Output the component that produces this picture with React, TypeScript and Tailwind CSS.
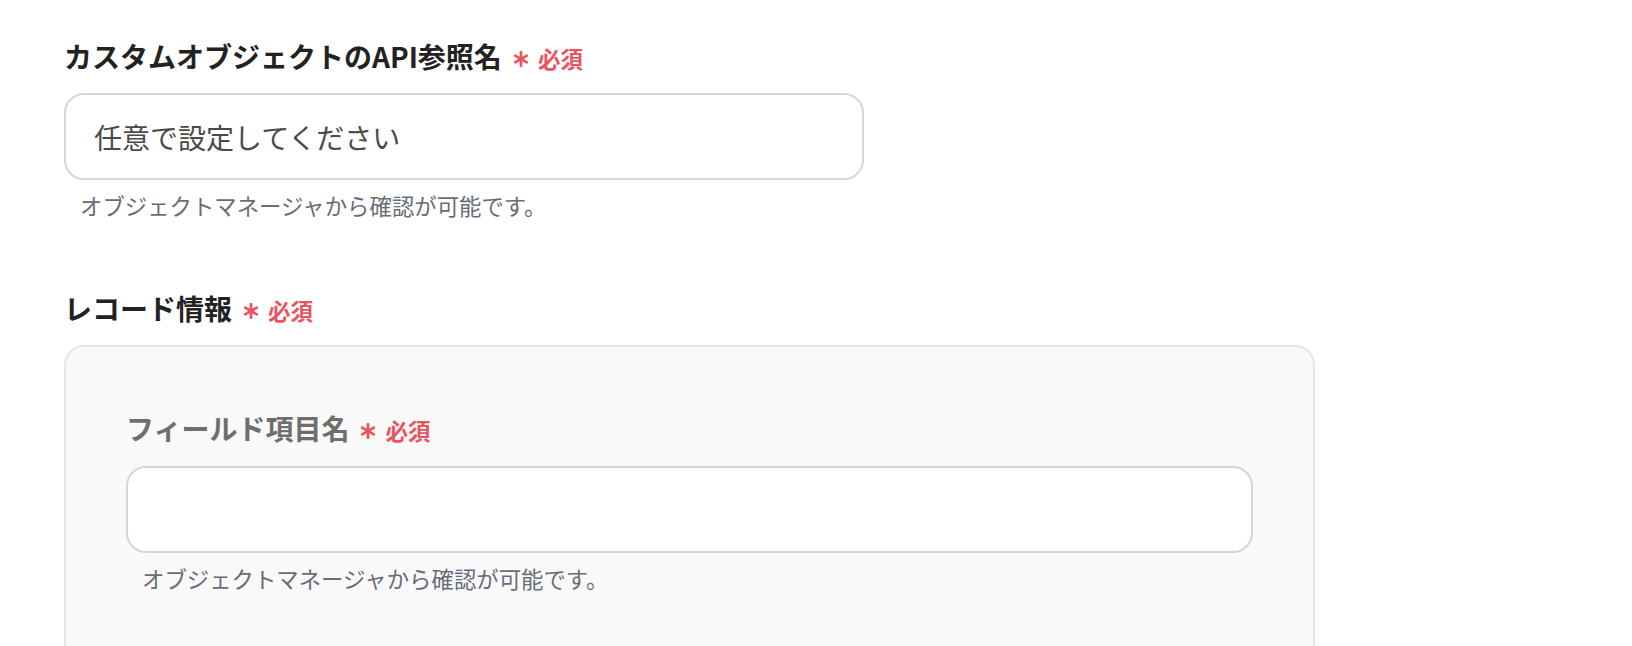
import React, { FC } from "react";

const font = { fontFamily: '"Noto Sans CJK JP", "Noto Sans", sans-serif' };

// Red asterisk + 必須 marker
const Required: FC = () => (
  <span className="flex items-center gap-[8px] pt-[5px] ml-[10px] text-[#e9545f]">
    <svg width="18" height="18" viewBox="0 0 16 16" className="shrink-0">
      <g stroke="currentColor" strokeWidth="2.4" strokeLinecap="butt">
        <line x1="8" y1="1" x2="8" y2="15" />
        <line x1="2" y1="4.5" x2="14" y2="11.5" />
        <line x1="2" y1="11.5" x2="14" y2="4.5" />
      </g>
    </svg>
    <span className="text-[22.5px] font-bold leading-none">必須</span>
  </span>
);

const Hint: FC = () => (
  <p className="mt-[9px] pl-4 text-[22.4px] leading-[33px] text-[#676d78]">
    オブジェクトマネージャから確認が可能です。
  </p>
);

const App: FC = () => {
  return (
    <div className="min-h-screen bg-white pl-16 pt-[35px]" style={font}>
      {/* Custom object API name */}
      <section>
        <div className="flex items-center">
          <h2 className="text-[28px] leading-[42px] font-bold text-[#222222]">
            カスタムオブジェクトのAPI参照名
          </h2>
          <Required />
        </div>
        <div className="mt-4 w-[800px] h-[87px] flex items-center rounded-[20px] border-2 border-[#d3d6db] bg-white pl-[28px]">
          <span className="text-[28px] text-[#4a4a4a]">任意で設定してください</span>
        </div>
        <Hint />
      </section>

      {/* Record info */}
      <section className="mt-[65px]">
        <div className="flex items-center">
          <h2 className="text-[28px] leading-[42px] font-bold text-[#222222]">
            レコード情報
          </h2>
          <Required />
        </div>
        <div className="mt-[16px] w-[1251px] rounded-[20px] border-2 border-[#e6e6e6] bg-[#f9f9f9] px-[60px] pt-[60px] pb-[120px]">
          <div className="flex items-center">
            <h3 className="text-[28px] leading-[42px] font-bold text-[#6e6e6e]">
              フィールド項目名
            </h3>
            <Required />
          </div>
          <div className="mt-[17px] h-[87px] rounded-[20px] border-2 border-[#d3d6db] bg-white" />
          <Hint />
        </div>
      </section>
    </div>
  );
};

export default App;
